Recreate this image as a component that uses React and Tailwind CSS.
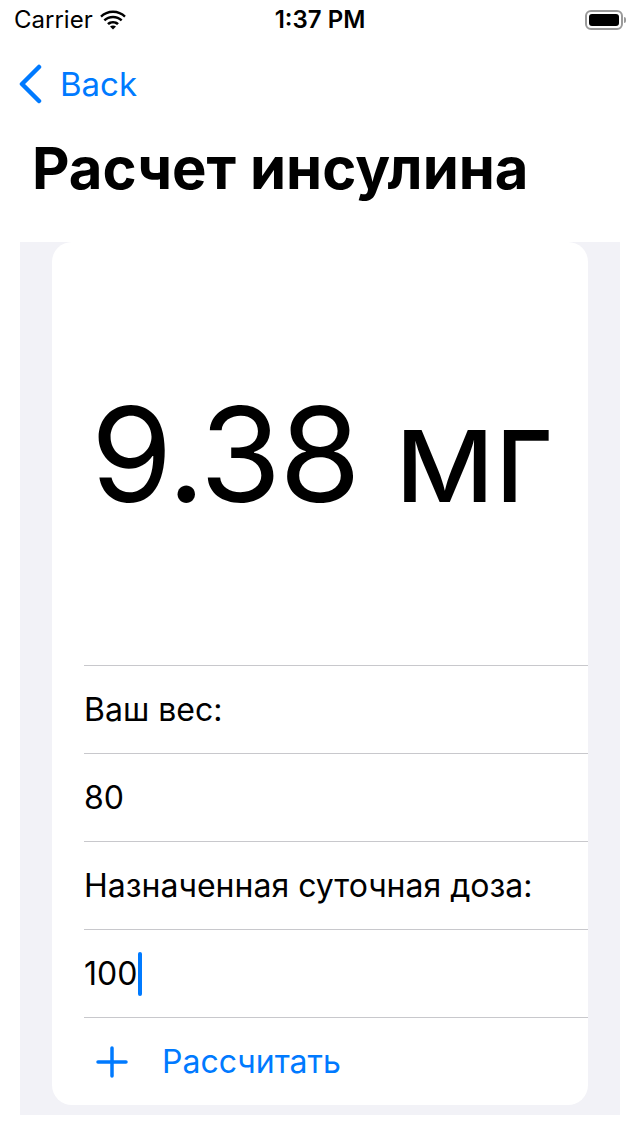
import React from "react";

const font = { fontFamily: "Inter, 'Noto Sans', sans-serif" };

const Wifi = () => (
  <svg width="26" height="20" viewBox="0 0 26 20" fill="black">
    <path d="M13 3C8.6 3 4.7 4.7 1.8 7.5L0.2 5.8C3.5 2.6 8 0.6 13 0.6s9.5 2 12.8 5.2l-1.6 1.7C21.3 4.7 17.4 3 13 3z" />
    <path d="M13 8.2c-3 0-5.8 1.2-7.8 3.1L3.5 9.6C6 7.2 9.3 5.8 13 5.8s7 1.4 9.5 3.8l-1.7 1.7c-2-1.9-4.8-3.1-7.8-3.1z" />
    <path d="M13 13.4c-1.6 0-3 .6-4.1 1.6L7.1 13.3c1.5-1.4 3.6-2.3 5.9-2.3s4.4.9 5.9 2.3l-1.8 1.7c-1.1-1-2.5-1.6-4.1-1.6z" />
    <path d="M13 19.6l-3-3c.8-.7 1.9-1.1 3-1.1s2.2.4 3 1.1z" />
  </svg>
);

const Battery = () => (
  <div className="flex items-center">
    <div className="w-[38px] h-[20px] rounded-[6px] border-2 border-[#9a9a9a] p-[2px]">
      <div className="w-full h-full rounded-[3px] bg-black" />
    </div>
    <div className="w-[2px] h-[6px] bg-[#9a9a9a] rounded-r ml-[1px]" />
  </div>
);

const Row = ({ children }) => (
  <div className="ml-8 h-[88px] border-t border-[#c8c8cc] flex items-center text-[32px] text-black">
    {children}
  </div>
);

export default function App() {
  return (
    <div className="w-[640px] h-[1136px] bg-white relative overflow-hidden" style={font}>
      {/* status bar */}
      <div className="h-[40px] flex items-center justify-between px-[14px] relative">
        <div className="flex items-center gap-[7px] text-[24px] text-black">
          <span>Carrier</span>
          <Wifi />
        </div>
        <div className="absolute left-0 right-0 top-0 h-[40px] flex items-center justify-center text-[24px] font-semibold text-black">
          1:37 PM
        </div>
        <Battery />
      </div>

      {/* nav bar */}
      <div className="h-[88px] flex items-center pl-[18px] text-[#007aff]">
        <svg width="26" height="40" viewBox="0 0 26 40" fill="none" stroke="#007aff" strokeWidth="4.5" strokeLinecap="round" strokeLinejoin="round">
          <path d="M21 3L4 20l17 17" />
        </svg>
        <span className="ml-[16px] text-[33px] leading-none">Back</span>
      </div>

      {/* title */}
      <div className="h-[114px] pl-[32px] pt-[8px]">
        <h1 className="text-[58px] font-bold text-black leading-[64px]">Расчет инсулина</h1>
      </div>

      {/* grouped section */}
      <div className="mx-[20px] bg-[#f2f2f7] px-[32px] pb-[10px]">
        <div className="bg-white rounded-[20px] overflow-hidden">
          <div className="h-[423px] flex items-center justify-center">
            <span className="text-[132px] font-normal text-black leading-none tracking-[-2px]">9.38 мг</span>
          </div>
          <Row>Ваш вес:</Row>
          <Row>80</Row>
          <Row>Назначенная суточная доза:</Row>
          <Row>
            <span>100</span>
            <span className="inline-block w-[4px] h-[44px] bg-[#007aff] rounded-sm ml-[1px]" />
          </Row>
          <div className="ml-8 h-[88px] border-t border-[#c8c8cc] flex items-center text-[#007aff]">
            <svg width="32" height="32" viewBox="0 0 32 32" className="ml-[12px]" stroke="#007aff" strokeWidth="3.5" strokeLinecap="round">
              <path d="M16 2v28M2 16h28" />
            </svg>
            <span className="ml-[34px] text-[32px]">Рассчитать</span>
          </div>
        </div>
      </div>
    </div>
  );
}
